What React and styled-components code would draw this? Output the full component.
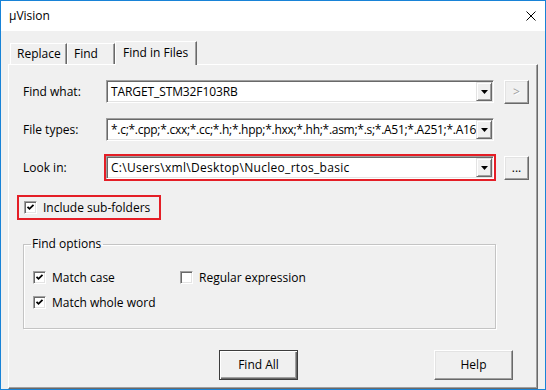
import React from 'react';
import styled, { createGlobalStyle } from 'styled-components';

const Global = createGlobalStyle`
  html, body { margin: 0; padding: 0; background: #ffffff; }
  body { font-family: "Open Sans", "Noto Sans", sans-serif; font-size: 12px; color: #000; }
  * { box-sizing: border-box; }
`;

const Window = styled.div`
  width: 546px;
  height: 390px;
  border: 1px solid #1883d7;
  background: #f0f0f0;
  display: flex;
  flex-direction: column;
  overflow: hidden;
`;

const TitleBar = styled.div`
  flex: none;
  height: 30px;
  background: #ffffff;
  display: flex;
  align-items: center;
  justify-content: space-between;
  padding: 0 9px 0 8px;
`;

const Title = styled.span`
  font-size: 12px;
  line-height: 16px;
`;

const CloseIcon = styled.svg`
  width: 10px;
  height: 10px;
  display: block;
`;

const Body = styled.div`
  flex: 1;
  display: flex;
  flex-direction: column;
  padding: 9px 7px 0;
`;

const TabStrip = styled.div`
  flex: none;
  height: 24px;
  display: flex;
  align-items: flex-end;
  padding-left: 2px;
`;

const Tab = styled.div`
  position: relative;
  z-index: ${p => (p.$active ? 2 : 1)};
  width: ${p => p.$w}px;
  height: ${p => (p.$active ? 24 : 21)}px;
  margin-bottom: ${p => (p.$active ? '-1px' : '0')};
  background: #f0f0f0;
  border-top: 1px solid #ffffff;
  border-left: 1px solid #ffffff;
  border-right: 1px solid #696969;
  box-shadow: inset -1px 0 0 #a0a0a0;
  display: flex;
  align-items: center;
  padding: 0 0 ${p => (p.$active ? 2 : 0)}px ${p => (p.$active ? 7 : 6)}px;
  line-height: 16px;
  white-space: nowrap;
`;

const Panel = styled.div`
  flex: none;
  height: 325px;
  border: 1px solid;
  border-color: #ffffff #696969 #696969 #ffffff;
  box-shadow: inset -1px -1px 0 #a0a0a0;
  padding: 15px 7px 0 14px;
  display: flex;
  flex-direction: column;
  align-items: flex-start;
`;

const FieldGrid = styled.div`
  display: grid;
  grid-template-columns: 83px 388px 10px 25px;
  grid-auto-rows: 24px;
  row-gap: 14px;
`;

const Label = styled.div`
  grid-column: 1;
  align-self: center;
  line-height: 16px;
  white-space: nowrap;
`;

const Combo = styled.div`
  grid-column: 2;
  align-self: start;
  height: 23px;
  background: #ffffff;
  border: 1px solid;
  border-color: #a0a0a0 #ffffff #ffffff #a0a0a0;
  box-shadow: inset 1px 1px 0 #696969, inset -1px -1px 0 #e3e3e3;
  padding: 1px;
  display: flex;
  outline: ${p => (p.$highlight ? '2px solid #e41e26' : 'none')};
  outline-offset: 0;
`;

const ComboText = styled.div`
  flex: 1;
  min-width: 0;
  overflow: hidden;
  white-space: nowrap;
  padding-left: 3px;
  line-height: 19px;
  letter-spacing: ${p => p.$tracking || 0}px;
`;

const DropButton = styled.div`
  flex: none;
  width: 16px;
  background: #f0f0f0;
  border: 1px solid;
  border-color: #e3e3e3 #696969 #696969 #e3e3e3;
  box-shadow: inset 1px 1px 0 #ffffff, inset -1px -1px 0 #a0a0a0;
  display: flex;
  align-items: center;
  justify-content: center;
`;

const SideButton = styled.div`
  grid-column: 4;
  width: 25px;
  height: 24px;
  background: #f0f0f0;
  border: 1px solid;
  border-color: #ffffff #696969 #696969 #ffffff;
  box-shadow: inset -1px -1px 0 #a0a0a0, inset 1px 1px 0 #e3e3e3;
  display: flex;
  align-items: center;
  justify-content: center;
  line-height: 14px;
  color: ${p => (p.$disabled ? '#a0a0a0' : '#000')};
  text-shadow: ${p => (p.$disabled ? '1px 1px 0 #ffffff' : 'none')};
`;

const CheckRow = styled.label`
  display: inline-flex;
  align-items: center;
  gap: 6px;
  height: 17px;
  line-height: 16px;
  white-space: nowrap;
  margin: ${p => (p.$framed ? '19px 0 0 -2px' : '0')};
  padding: ${p => (p.$framed ? '0 7px 0 3px' : '0')};
  outline: ${p => (p.$framed ? '2px solid #e41e26' : 'none')};
  outline-offset: 2px;
`;

const Box = styled.span`
  flex: none;
  width: 13px;
  height: 13px;
  background: #ffffff;
  border: 1px solid;
  border-color: #a0a0a0 #ffffff #ffffff #a0a0a0;
  box-shadow: inset 1px 1px 0 #696969, inset -1px -1px 0 #e3e3e3;
  display: flex;
  align-items: center;
  justify-content: center;
`;

const Group = styled.fieldset`
  width: 473px;
  height: 92px;
  margin: 21px 0 0 0;
  padding: 18px 0 0 9px;
  border: 1px solid #c4c4c4;
  box-shadow: inset 1px 1px 0 #ffffff, 1px 1px 0 #ffffff;
  min-width: 0;
`;

const Legend = styled.legend`
  margin-left: -2px;
  padding: 0 2px 0 1px;
  line-height: 14px;
`;

const OptionGrid = styled.div`
  display: grid;
  grid-template-columns: 147px 200px;
  grid-auto-rows: 17px;
  row-gap: 8px;
`;

const ButtonRow = styled.div`
  align-self: stretch;
  display: flex;
  justify-content: flex-end;
  gap: 136px;
  margin-top: 21px;
  padding-right: 17px;
`;

const PushButton = styled.div`
  width: 79px;
  height: 30px;
  background: #f0f0f0;
  border: 1px solid;
  border-color: ${p => (p.$default ? '#3c3c3c' : '#ffffff #696969 #696969 #ffffff')};
  box-shadow: ${p =>
    p.$default
      ? 'inset 1px 1px 0 #ffffff, inset -1px -1px 0 #696969, inset -2px -2px 0 #a0a0a0'
      : 'inset -1px -1px 0 #a0a0a0, inset 1px 1px 0 #e3e3e3'};
  display: flex;
  align-items: center;
  justify-content: center;
  line-height: 16px;
`;

const Arrow = () => (
  <svg width="7" height="4" viewBox="0 0 7 4">
    <polygon points="0,0 7,0 3.5,4" fill="#000" />
  </svg>
);

const Check = () => (
  <svg width="9" height="9" viewBox="0 0 9 9">
    <polyline points="1.5,3.8 3.5,5.8 7.5,1.8" fill="none" stroke="#000" strokeWidth="1.8" />
  </svg>
);

const ComboBox = ({ value, highlight, tracking }) => (
  <Combo $highlight={highlight}>
    <ComboText $tracking={tracking}>{value}</ComboText>
    <DropButton>
      <Arrow />
    </DropButton>
  </Combo>
);

const CheckBox = ({ checked, label, framed }) => (
  <CheckRow $framed={framed}>
    <Box>{checked && <Check />}</Box>
    {label}
  </CheckRow>
);

export default function App() {
  return (
    <>
      <Global />
      <Window>
        <TitleBar>
          <Title>µVision</Title>
          <CloseIcon viewBox="0 0 10 10">
            <path d="M0.5 0.5 L9.5 9.5 M9.5 0.5 L0.5 9.5" stroke="#000" strokeWidth="1" fill="none" />
          </CloseIcon>
        </TitleBar>
        <Body>
          <TabStrip>
            <Tab $w={57}>Replace</Tab>
            <Tab $w={48}>Find</Tab>
            <Tab $w={82} $active>Find in Files</Tab>
          </TabStrip>
          <Panel>
            <FieldGrid>
              <Label>Find what:</Label>
              <ComboBox value="TARGET_STM32F103RB" tracking={-0.1} />
              <SideButton $disabled>&gt;</SideButton>
              <Label>File types:</Label>
              <ComboBox value="*.c;*.cpp;*.cxx;*.cc;*.h;*.hpp;*.hxx;*.hh;*.asm;*.s;*.A51;*.A251;*.A16" tracking={-0.28} />
              <Label>Look in:</Label>
              <ComboBox value="C:\Users\xml\Desktop\Nucleo_rtos_basic" highlight tracking={0.3} />
              <SideButton>...</SideButton>
            </FieldGrid>
            <CheckBox checked framed label="Include sub-folders" />
            <Group>
              <Legend>Find options</Legend>
              <OptionGrid>
                <CheckBox checked label="Match case" />
                <CheckBox label="Regular expression" />
                <CheckBox checked label="Match whole word" />
              </OptionGrid>
            </Group>
            <ButtonRow>
              <PushButton $default>Find All</PushButton>
              <PushButton>Help</PushButton>
            </ButtonRow>
          </Panel>
        </Body>
      </Window>
    </>
  );
}
